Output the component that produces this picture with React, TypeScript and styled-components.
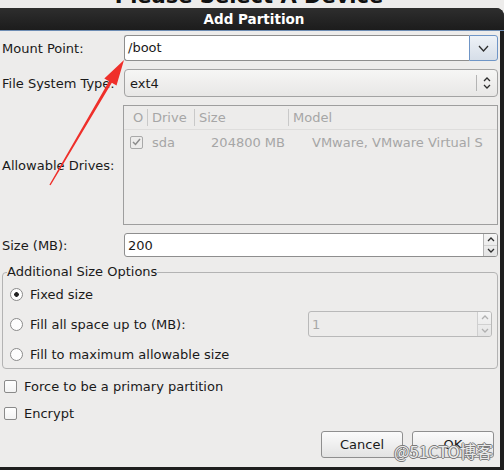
import React from 'react';
import styled, {createGlobalStyle} from 'styled-components';

const GlobalStyle = createGlobalStyle`
  html, body {
    margin: 0;
    padding: 0;
    background: #edeceb;
  }
  body {
    font-family: 'DejaVu Sans', 'Noto Sans', sans-serif;
    font-size: 13px;
    color: #1a1a1a;
  }
`

const Chevron = ({dir, w = 9, h = 5, color = '#2e2e2e'}: {dir: 'up' | 'down', w?: number, h?: number, color?: string}) => (
    <svg width={w} height={h} viewBox={`0 0 ${w} ${h}`}>
        <polyline
            points={dir === 'down'
                ? `1,1 ${w / 2},${h - 1} ${w - 1},1`
                : `1,${h - 1} ${w / 2},1 ${w - 1},${h - 1}`}
            fill="none" stroke={color} strokeWidth="1.3"/>
    </svg>
)

export default function App() {
    return (
        <>
            <GlobalStyle/>
            <StyledPage>
                <StyledBackdrop>
                    <StyledBackdropTitle>Please Select A Device</StyledBackdropTitle>
                </StyledBackdrop>
                <StyledWindow>
                    <StyledTitleBar>Add Partition</StyledTitleBar>
                    <StyledBody>
                        <StyledForm>
                            <StyledLabel>Mount Point:</StyledLabel>
                            <StyledComboEntry>
                                <StyledEntry>/boot</StyledEntry>
                                <StyledDropButton><Chevron dir="down" w={11} h={7}/></StyledDropButton>
                            </StyledComboEntry>

                            <StyledLabel>File System Type:</StyledLabel>
                            <StyledCombo>
                                <StyledComboText>ext4</StyledComboText>
                                <StyledComboSep/>
                                <StyledUpDown>
                                    <Chevron dir="up" w={8} h={5}/>
                                    <Chevron dir="down" w={8} h={5}/>
                                </StyledUpDown>
                            </StyledCombo>

                            <StyledLabel>Allowable Drives:</StyledLabel>
                            <StyledTree>
                                <StyledTreeHeader>
                                    <StyledHeadCell>O</StyledHeadCell>
                                    <StyledHeadCell sep>Drive</StyledHeadCell>
                                    <StyledHeadCell sep>Size</StyledHeadCell>
                                    <StyledHeadCell sep>Model</StyledHeadCell>
                                </StyledTreeHeader>
                                <StyledTreeRow>
                                    <StyledTreeCheck>
                                        <svg width="9" height="8" viewBox="0 0 9 8">
                                            <polyline points="1,4 3.5,6.5 8,1" fill="none" stroke="#8c8c8c" strokeWidth="1.5"/>
                                        </svg>
                                    </StyledTreeCheck>
                                    <StyledCell>sda</StyledCell>
                                    <StyledCell right>204800 MB</StyledCell>
                                    <StyledCell indent>VMware, VMware Virtual S</StyledCell>
                                </StyledTreeRow>
                            </StyledTree>

                            <StyledLabel>Size (MB):</StyledLabel>
                            <StyledSpin>
                                <StyledSpinText>200</StyledSpinText>
                                <StyledSpinButtons>
                                    <StyledSpinHalf><Chevron dir="up" w={8} h={5}/></StyledSpinHalf>
                                    <StyledSpinHalf><Chevron dir="down" w={8} h={5}/></StyledSpinHalf>
                                </StyledSpinButtons>
                            </StyledSpin>
                        </StyledForm>

                        <StyledFrame>
                            <StyledLegend>Additional Size Options</StyledLegend>
                            <StyledOptionRow h={24}>
                                <StyledRadio checked/>
                                <span>Fixed size</span>
                            </StyledOptionRow>
                            <StyledOptionRow h={26}>
                                <StyledRadio/>
                                <span>Fill all space up to (MB):</span>
                                <StyledSpin disabled small>
                                    <StyledSpinText disabled>1</StyledSpinText>
                                    <StyledSpinButtons disabled>
                                        <StyledSpinHalf><Chevron dir="up" w={8} h={5} color="#b0b0b0"/></StyledSpinHalf>
                                        <StyledSpinHalf><Chevron dir="down" w={8} h={5} color="#b0b0b0"/></StyledSpinHalf>
                                    </StyledSpinButtons>
                                </StyledSpin>
                            </StyledOptionRow>
                            <StyledOptionRow h={24}>
                                <StyledRadio/>
                                <span>Fill to maximum allowable size</span>
                            </StyledOptionRow>
                        </StyledFrame>

                        <StyledCheckRow first>
                            <StyledCheckBox/>
                            <span>Force to be a primary partition</span>
                        </StyledCheckRow>
                        <StyledCheckRow>
                            <StyledCheckBox/>
                            <span>Encrypt</span>
                        </StyledCheckRow>

                        <StyledButtonRow>
                            <StyledButton>Cancel</StyledButton>
                            <StyledButton>OK</StyledButton>
                        </StyledButtonRow>
                    </StyledBody>
                </StyledWindow>

                <StyledArrow width="504" height="470" viewBox="0 0 504 470">
                    <polygon
                        points="124,60 116.5,85.5 111.8,82.8 50.6,185.3 49.4,184.7 109,81.2 104.3,78.5"
                        fill="#ef2f2a"/>
                </StyledArrow>
                <StyledWatermark>@51CTO博客</StyledWatermark>
            </StyledPage>
        </>
    );
}

const StyledPage=styled.div`
  position: relative;
  width: 504px;
  height: 470px;
  overflow: hidden;
`

const StyledBackdrop=styled.div`
  height: 8px;
  overflow: hidden;
  text-align: center;
  padding-right: 6px;
`

const StyledBackdropTitle=styled.div`
  font-size: 21px;
  font-weight: bold;
  line-height: 21px;
  margin-top: -14px;
  color: #111;
`

const StyledWindow=styled.div`
  background: #1e1e1e;
  border-radius: 0 8px 0 0;
  padding: 0 4px 3px 0;
  height: 462px;
  box-sizing: border-box;
  display: flex;
  flex-direction: column;
`

const StyledTitleBar=styled.div`
  height: 22px;
  line-height: 22px;
  text-align: center;
  color: #fff;
  font-weight: bold;
  font-size: 13.5px;
  padding-left: 4px;
  background: linear-gradient(#2e2e2e, #1c1c1c);
  border-radius: 0 8px 0 0;
  margin-right: -4px;
  border-bottom: 1px solid #6d8cb3;
`

const StyledBody=styled.div`
  flex: 1;
  background: #edeceb;
  padding: 4px 2px 0 2px;
  display: flex;
  flex-direction: column;
`

const StyledForm=styled.div`
  display: grid;
  grid-template-columns: 122px 1fr;
  grid-template-rows: 26px 28px 120px 24px;
  row-gap: 8px;
  align-items: center;
`

const StyledLabel=styled.div`
  white-space: nowrap;
`

const StyledComboEntry=styled.div`
  display: flex;
  height: 26px;
`

const StyledEntry=styled.div`
  flex: 1;
  background: #fff;
  border: 1px solid #8e8e8e;
  border-right: none;
  border-radius: 3px 0 0 3px;
  padding-left: 3px;
  line-height: 24px;
`

const StyledDropButton=styled.div`
  width: 27px;
  display: flex;
  align-items: center;
  justify-content: center;
  background: linear-gradient(#eef2f7, #d6dee8);
  border: 1px solid #6f95c6;
  border-radius: 0 3px 3px 0;
`

const StyledCombo=styled.div`
  height: 28px;
  box-sizing: border-box;
  display: flex;
  align-items: center;
  border: 1px solid #a3a3a3;
  border-radius: 4px;
  background: linear-gradient(#f6f6f5, #e8e7e6);
`

const StyledComboText=styled.div`
  flex: 1;
  padding-left: 5px;
`

const StyledComboSep=styled.div`
  width: 1px;
  height: 16px;
  background: #b4b4b4;
`

const StyledUpDown=styled.div`
  width: 20px;
  display: flex;
  flex-direction: column;
  align-items: center;
  gap: 2px;
`

const StyledTree=styled.div`
  height: 120px;
  box-sizing: border-box;
  border: 1px solid #9e9e9e;
  margin-left: -1px;
  color: #a6a6a6;
`

const StyledTreeHeader=styled.div`
  display: grid;
  grid-template-columns: 23px 47px 94px 1fr;
  height: 23px;
  align-items: center;
  border-bottom: 1px solid #dedddc;
`

const StyledHeadCell=styled.div<{sep?: boolean}>`
  height: 17px;
  line-height: 17px;
  padding-left: ${p => p.sep ? '4px' : '9px'};
  border-left: ${p => p.sep ? '1px solid #c9c9c9' : 'none'};
  white-space: nowrap;
`

const StyledTreeRow=styled.div`
  display: grid;
  grid-template-columns: 23px 47px 94px 1fr;
  height: 24px;
  align-items: center;
`

const StyledTreeCheck=styled.div`
  width: 11px;
  height: 11px;
  margin-left: 6px;
  border: 1px solid #a9a9a9;
  border-radius: 2px;
  display: flex;
  align-items: center;
  justify-content: center;
`

const StyledCell=styled.div<{right?: boolean, indent?: boolean}>`
  white-space: nowrap;
  overflow: hidden;
  text-align: ${p => p.right ? 'right' : 'left'};
  padding-left: ${p => p.indent ? '24px' : p.right ? '0' : '5px'};
  padding-right: ${p => p.right ? '3px' : '0'};
`

const StyledSpin=styled.div<{disabled?: boolean, small?: boolean}>`
  height: ${p => p.small ? '26px' : '24px'};
  width: ${p => p.small ? '184px' : 'auto'};
  margin-left: ${p => p.small ? 'auto' : '0'};
  box-sizing: border-box;
  display: flex;
  background: ${p => p.disabled ? '#edeceb' : '#fff'};
  border: 1px solid ${p => p.disabled ? '#b9b9b9' : '#8e8e8e'};
  border-radius: 3px;
`

const StyledSpinText=styled.div<{disabled?: boolean}>`
  flex: 1;
  padding-left: 3px;
  display: flex;
  align-items: center;
  color: ${p => p.disabled ? '#a8a8a8' : 'inherit'};
`

const StyledSpinButtons=styled.div<{disabled?: boolean}>`
  width: 13px;
  display: flex;
  flex-direction: column;
  border-left: 1px solid ${p => p.disabled ? '#cfcfcf' : '#b5b5b5'};
  background: linear-gradient(#f5f5f5, #e4e4e4);
  border-radius: 0 2px 2px 0;
`

const StyledSpinHalf=styled.div`
  flex: 1;
  display: flex;
  align-items: center;
  justify-content: center;
  & + & {
    border-top: 1px solid #d0d0d0;
  }
`

const StyledFrame=styled.fieldset`
  margin: 8px 0 0 0;
  padding: 3px 5px 2px 4px;
  border: 1px solid #b3b3b3;
  border-radius: 4px;
  min-width: 0;
  display: flex;
  flex-direction: column;
  gap: 5px;
`

const StyledLegend=styled.legend`
  padding: 0;
  font-size: 13px;
  line-height: 14px;
`

const StyledOptionRow=styled.div<{h: number}>`
  height: ${p => p.h}px;
  display: flex;
  align-items: center;
  gap: 7px;
  padding-left: 3px;
`

const StyledRadio=styled.div<{checked?: boolean}>`
  width: 11px;
  height: 11px;
  border: 1px solid #8a8a8a;
  border-radius: 50%;
  background: radial-gradient(circle, ${p => p.checked ? '#222 0 2px, #fdfdfd 2.6px' : '#fdfdfd 0'}), #fdfdfd;
  flex-shrink: 0;
`

const StyledCheckRow=styled.div<{first?: boolean}>`
  height: 22px;
  margin-top: ${p => p.first ? '6px' : '5px'};
  display: flex;
  align-items: center;
  gap: 7px;
  padding-left: 2px;
`

const StyledCheckBox=styled.div`
  width: 11px;
  height: 11px;
  border: 1px solid #8a8a8a;
  border-radius: 2px;
  background: linear-gradient(#fff, #f3f3f3);
`

const StyledButtonRow=styled.div`
  margin-top: 7px;
  display: flex;
  justify-content: flex-end;
  gap: 9px;
  padding-right: 4px;
`

const StyledButton=styled.div`
  width: 82px;
  height: 27px;
  box-sizing: border-box;
  display: flex;
  align-items: center;
  justify-content: center;
  border: 1px solid #8f8f8f;
  border-radius: 3px;
  background: linear-gradient(#fbfbfb, #e3e3e3);
`

const StyledArrow=styled.svg`
  position: absolute;
  left: 0;
  top: 0;
  pointer-events: none;
`

const StyledWatermark=styled.div`
  position: absolute;
  left: 394px;
  top: 442px;
  font-family: 'Noto Sans CJK SC', 'DejaVu Sans', sans-serif;
  font-size: 16.5px;
  line-height: 19px;
  color: rgba(250, 250, 250, 0.9);
  text-shadow: 1px 0 #7a7a7a, -1px 0 #7a7a7a, 0 1px #7a7a7a, 0 -1px #7a7a7a;
  pointer-events: none;
`
